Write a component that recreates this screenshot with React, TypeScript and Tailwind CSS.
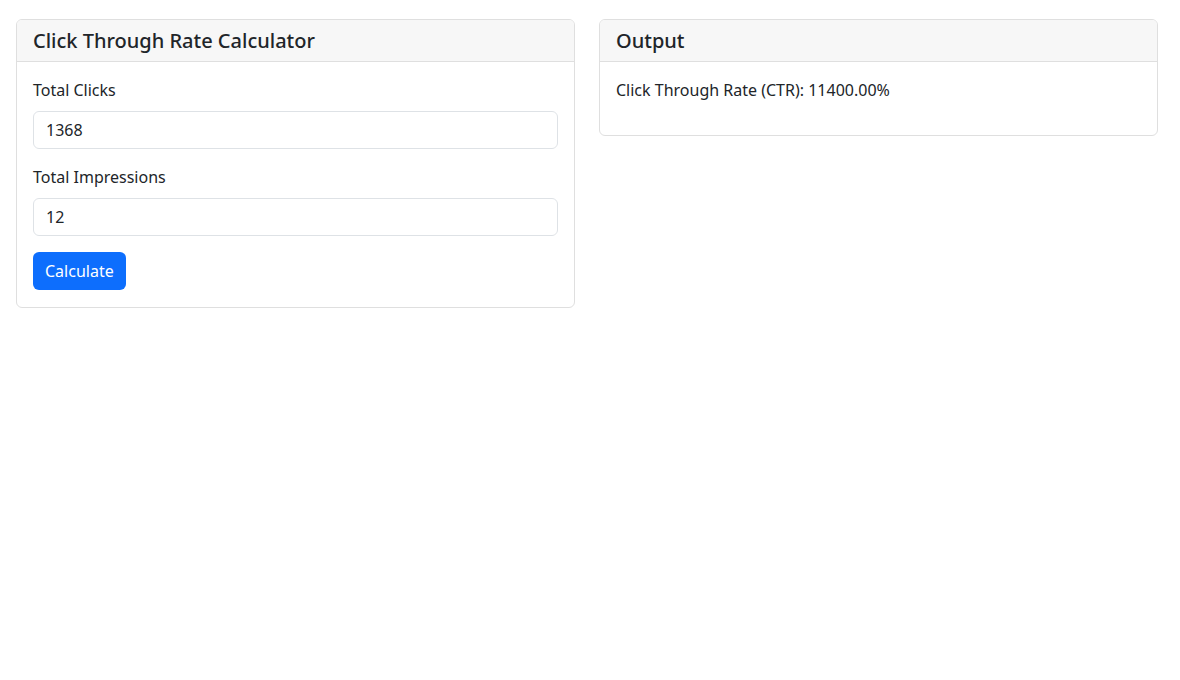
import { useState } from 'react';

const font = { fontFamily: '"Segoe UI", "Noto Sans", "Liberation Sans", sans-serif' };

export default function App() {
  const [clicks, setClicks] = useState("1368");
  const [impressions, setImpressions] = useState("12");
  const [ctr, setCtr] = useState<string>("11400.00");

  const calculate = () => {
    const c = parseFloat(clicks);
    const i = parseFloat(impressions);
    if (!isNaN(c) && !isNaN(i) && i !== 0) {
      setCtr(((c / i) * 100).toFixed(2));
    }
  };

  return (
    <div style={font} className="min-h-[680px] bg-white text-[#212529] text-base pl-4 pr-[22px] pt-[19px]">
      <div className="grid grid-cols-2 gap-6 items-start">
        {/* Calculator card */}
        <div className="border border-[#dfdfdf] rounded-md overflow-hidden">
          <div className="bg-[#f7f7f7] border-b border-[#dfdfdf] px-4 py-2">
            <h5 className="text-xl font-medium leading-[25px]">Click Through Rate Calculator</h5>
          </div>
          <div className="px-4 pt-4 pb-[17px]">
            <div className="mb-4">
              <label className="block leading-6 mb-[9px]">Total Clicks</label>
              <input
                type="number"
                value={clicks}
                onChange={(e) => setClicks(e.target.value)}
                className="w-full h-[38px] border border-[#dee2e6] rounded-md px-3 leading-6 outline-none"
              />
            </div>
            <div className="mb-4">
              <label className="block leading-6 mb-[9px]">Total Impressions</label>
              <input
                type="number"
                value={impressions}
                onChange={(e) => setImpressions(e.target.value)}
                className="w-full h-[38px] border border-[#dee2e6] rounded-md px-3 leading-6 outline-none"
              />
            </div>
            <button
              onClick={calculate}
              className="bg-[#0d6efd] text-white rounded-md px-3 h-[38px] leading-6"
            >
              Calculate
            </button>
          </div>
        </div>

        {/* Output card */}
        <div className="border border-[#dfdfdf] rounded-md overflow-hidden">
          <div className="bg-[#f7f7f7] border-b border-[#dfdfdf] px-4 py-2">
            <h5 className="text-xl font-medium leading-[25px]">Output</h5>
          </div>
          <div className="px-4 pt-4 pb-[17px]">
            <p className="leading-6 mb-4">Click Through Rate (CTR): {ctr}%</p>
          </div>
        </div>
      </div>
    </div>
  );
}
